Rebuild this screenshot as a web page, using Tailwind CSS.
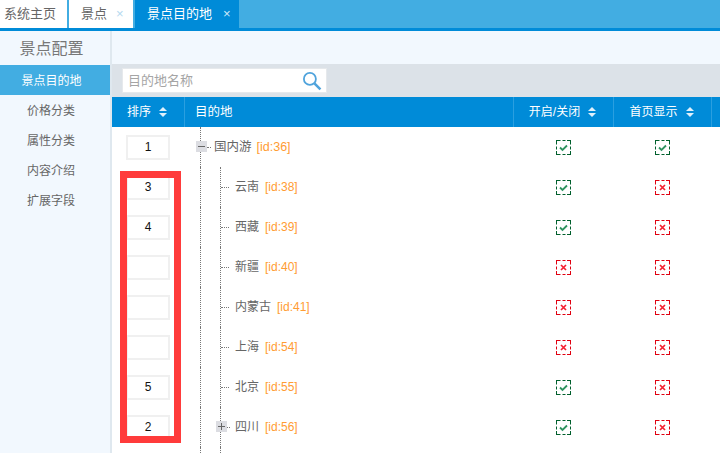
<!DOCTYPE html>
<html lang="zh">
<head>
<meta charset="utf-8">
<script src="https://cdn.jsdelivr.net/npm/@tailwindcss/browser@4"></script>
</head>
<body class="w-[720px] h-[453px] overflow-hidden bg-white font-['Liberation_Sans','Noto_Sans_CJK_SC',sans-serif] text-[12px] text-[#666]">
<svg class="hidden"><defs>
<symbol id="ok" viewBox="0 0 15 15"><path d="M0 .5h4.500m2 0h3m1.500 0h4M0 14.500h4.500m2 0h3m1.500 0h4M.5 0v4.500m0 2v3m0 1.500v4M14.500 0v4.500m0 2v3m0 1.500v4" fill="none" stroke="#005f2c"/><path d="M4 7.500 6.500 10 11 5.500" fill="none" stroke="#2f9460" stroke-width="1.800"/></symbol>
<symbol id="no" viewBox="0 0 15 15"><path d="M0 .5h4.500m2 0h3m1.500 0h4M0 14.500h4.500m2 0h3m1.500 0h4M.5 0v4.500m0 2v3m0 1.500v4M14.500 0v4.500m0 2v3m0 1.500v4" fill="none" stroke="#e00010"/><path d="M5 5l5 5M10 5l-5 5" fill="none" stroke="#f52030" stroke-width="1.700"/></symbol>
<symbol id="sort" viewBox="0 0 8 10"><path d="M4 0 8 4H0zM0 6h8L4 10z" fill="#dff0fb"/></symbol>
</defs></svg>

<div class="flex h-[31px] bg-[#42ade2] border-b-[3px] border-[#008bd8] text-[13px]">
  <div class="w-[69px] bg-white border-r-2 border-[#42ade2] pl-[4px] leading-[28px]">系统主页</div>
  <div class="w-[66px] bg-white border-r-2 border-[#42ade2] pl-[12px] flex items-center gap-[9px]"><span>景点</span><span class="text-[#b5d9ef]">×</span></div>
  <div class="w-[104px] bg-[#008bd8] text-white pl-[12px] flex items-center gap-[11px]"><span>景点目的地</span><span class="text-[#cfe9f8]">×</span></div>
</div>

<div class="flex h-[422px]">
  <aside class="w-[112px] shrink-0 bg-[#f2f8fe] border-r-2 border-[#dfe8ef]">
    <div class="h-[34px] pr-[7px] text-center text-[16px] leading-[36px] text-[#777]">景点配置</div>
    <ul class="text-center leading-[32px] text-[#666]">
      <li class="h-[30px] pr-[7px] bg-[#42ade2] text-white">景点目的地</li>
      <li class="h-[30px] pr-[8px]">价格分类</li>
      <li class="h-[30px] pr-[8px]">属性分类</li>
      <li class="h-[30px] pr-[8px]">内容介绍</li>
      <li class="h-[30px] pr-[8px]">扩展字段</li>
    </ul>
  </aside>

  <main class="relative flex-1 min-w-0">
    <div class="h-[33px] bg-[#f2f8fe]"></div>
    <div class="h-[33px] bg-[#dce2e8] pl-[10px] pt-[4px]">
      <div class="w-[205px] h-[25px] bg-white border border-[#e6e9ec] flex items-center justify-between pl-[5px] pr-[4px] text-[13px] text-[#a5a5a5]">
        <span>目的地名称</span>
        <svg class="w-[20px] h-[20px]" viewBox="0 0 19 19" fill="none" stroke="#4fa3dc"><circle cx="7.500" cy="7.500" r="5.700" stroke-width="1.700"/><path d="M11.800 11.800 17.500 17.500" stroke-width="2.400"/></svg>
      </div>
    </div>

    <div class="flex h-[30px] bg-[#008bd8] text-white items-center">
      <div class="w-[73px] h-full border-r border-[#2a9fe0] flex items-center justify-center gap-[8px] pr-[2px]"><span>排序</span><svg class="w-[8px] h-[10px]"><use href="#sort"/></svg></div>
      <div class="w-[329px] h-full border-r border-[#2a9fe0] flex items-center pl-[10px] text-[12.500px]">目的地</div>
      <div class="w-[100px] h-full border-r border-[#2a9fe0] flex items-center justify-center gap-[8px] pr-[2px]"><span>开启/关闭</span><svg class="w-[8px] h-[10px]"><use href="#sort"/></svg></div>
      <div class="w-[98px] h-full border-r border-[#2a9fe0] flex items-center justify-center gap-[8px] pr-[2px]"><span>首页显示</span><svg class="w-[8px] h-[10px]"><use href="#sort"/></svg></div>
    </div>

    <div class="h-[40px] flex items-stretch">
      <div class="w-[72px] flex items-center pl-[14px]"><div class="w-[44px] h-[25px] border-2 border-[#f0f0f0] text-center leading-[21px] text-[#111]">1</div></div>
      <div class="w-[329px] relative">
        <span class="absolute left-[16px] top-0 bottom-0 border-l border-dotted border-[#777]"></span>
        <span class="absolute left-[12px] top-[14px] w-[11px] h-[11px] bg-[#dcdde2] flex items-center justify-center"><span class="w-[7px] h-px bg-[#666]"></span></span>
        <span class="absolute left-[23px] top-[20px] w-[4px] border-t border-dotted border-[#777]"></span>
        <span class="absolute left-[30px] top-[11px] text-[12.500px] whitespace-nowrap">国内游<span class="ml-[5px] text-[#ff9c33]">[id:36]</span></span>
      </div>
      <div class="w-[100px] flex items-center justify-center"><svg class="w-[15px] h-[15px]"><use href="#ok"/></svg></div>
      <div class="w-[98px] flex items-center justify-center"><svg class="w-[15px] h-[15px]"><use href="#ok"/></svg></div>
    </div>

    <div class="h-[40px] flex items-stretch">
      <div class="w-[72px] flex items-center pl-[14px]"><div class="w-[44px] h-[25px] border-2 border-[#f0f0f0] text-center leading-[21px] text-[#111]">3</div></div>
      <div class="w-[329px] relative"><span class="absolute left-[16px] top-0 bottom-0 border-l border-dotted border-[#777]"></span><span class="absolute left-[36px] top-0 bottom-0 border-l border-dotted border-[#777]"></span><span class="absolute left-[37px] top-[20px] w-[8px] border-t border-dotted border-[#777]"></span><span class="absolute left-[51px] top-[11px] whitespace-nowrap">云南<span class="ml-[6px] text-[#ff9c33]">[id:38]</span></span></div>
      <div class="w-[100px] flex items-center justify-center"><svg class="w-[15px] h-[15px]"><use href="#ok"/></svg></div>
      <div class="w-[98px] flex items-center justify-center"><svg class="w-[15px] h-[15px]"><use href="#no"/></svg></div>
    </div>

    <div class="h-[40px] flex items-stretch">
      <div class="w-[72px] flex items-center pl-[14px]"><div class="w-[44px] h-[25px] border-2 border-[#f0f0f0] text-center leading-[21px] text-[#111]">4</div></div>
      <div class="w-[329px] relative"><span class="absolute left-[16px] top-0 bottom-0 border-l border-dotted border-[#777]"></span><span class="absolute left-[36px] top-0 bottom-0 border-l border-dotted border-[#777]"></span><span class="absolute left-[37px] top-[20px] w-[8px] border-t border-dotted border-[#777]"></span><span class="absolute left-[51px] top-[11px] whitespace-nowrap">西藏<span class="ml-[6px] text-[#ff9c33]">[id:39]</span></span></div>
      <div class="w-[100px] flex items-center justify-center"><svg class="w-[15px] h-[15px]"><use href="#ok"/></svg></div>
      <div class="w-[98px] flex items-center justify-center"><svg class="w-[15px] h-[15px]"><use href="#no"/></svg></div>
    </div>

    <div class="h-[40px] flex items-stretch">
      <div class="w-[72px] flex items-center pl-[14px]"><div class="w-[44px] h-[25px] border-2 border-[#f0f0f0]"></div></div>
      <div class="w-[329px] relative"><span class="absolute left-[16px] top-0 bottom-0 border-l border-dotted border-[#777]"></span><span class="absolute left-[36px] top-0 bottom-0 border-l border-dotted border-[#777]"></span><span class="absolute left-[37px] top-[20px] w-[8px] border-t border-dotted border-[#777]"></span><span class="absolute left-[51px] top-[11px] whitespace-nowrap">新疆<span class="ml-[6px] text-[#ff9c33]">[id:40]</span></span></div>
      <div class="w-[100px] flex items-center justify-center"><svg class="w-[15px] h-[15px]"><use href="#no"/></svg></div>
      <div class="w-[98px] flex items-center justify-center"><svg class="w-[15px] h-[15px]"><use href="#no"/></svg></div>
    </div>

    <div class="h-[40px] flex items-stretch">
      <div class="w-[72px] flex items-center pl-[14px]"><div class="w-[44px] h-[25px] border-2 border-[#f0f0f0]"></div></div>
      <div class="w-[329px] relative"><span class="absolute left-[16px] top-0 bottom-0 border-l border-dotted border-[#777]"></span><span class="absolute left-[36px] top-0 bottom-0 border-l border-dotted border-[#777]"></span><span class="absolute left-[37px] top-[20px] w-[8px] border-t border-dotted border-[#777]"></span><span class="absolute left-[51px] top-[11px] whitespace-nowrap">内蒙古<span class="ml-[6px] text-[#ff9c33]">[id:41]</span></span></div>
      <div class="w-[100px] flex items-center justify-center"><svg class="w-[15px] h-[15px]"><use href="#no"/></svg></div>
      <div class="w-[98px] flex items-center justify-center"><svg class="w-[15px] h-[15px]"><use href="#no"/></svg></div>
    </div>

    <div class="h-[40px] flex items-stretch">
      <div class="w-[72px] flex items-center pl-[14px]"><div class="w-[44px] h-[25px] border-2 border-[#f0f0f0]"></div></div>
      <div class="w-[329px] relative"><span class="absolute left-[16px] top-0 bottom-0 border-l border-dotted border-[#777]"></span><span class="absolute left-[36px] top-0 bottom-0 border-l border-dotted border-[#777]"></span><span class="absolute left-[37px] top-[20px] w-[8px] border-t border-dotted border-[#777]"></span><span class="absolute left-[51px] top-[11px] whitespace-nowrap">上海<span class="ml-[6px] text-[#ff9c33]">[id:54]</span></span></div>
      <div class="w-[100px] flex items-center justify-center"><svg class="w-[15px] h-[15px]"><use href="#no"/></svg></div>
      <div class="w-[98px] flex items-center justify-center"><svg class="w-[15px] h-[15px]"><use href="#no"/></svg></div>
    </div>

    <div class="h-[40px] flex items-stretch">
      <div class="w-[72px] flex items-center pl-[14px]"><div class="w-[44px] h-[25px] border-2 border-[#f0f0f0] text-center leading-[21px] text-[#111]">5</div></div>
      <div class="w-[329px] relative"><span class="absolute left-[16px] top-0 bottom-0 border-l border-dotted border-[#777]"></span><span class="absolute left-[36px] top-0 bottom-0 border-l border-dotted border-[#777]"></span><span class="absolute left-[37px] top-[20px] w-[8px] border-t border-dotted border-[#777]"></span><span class="absolute left-[51px] top-[11px] whitespace-nowrap">北京<span class="ml-[6px] text-[#ff9c33]">[id:55]</span></span></div>
      <div class="w-[100px] flex items-center justify-center"><svg class="w-[15px] h-[15px]"><use href="#ok"/></svg></div>
      <div class="w-[98px] flex items-center justify-center"><svg class="w-[15px] h-[15px]"><use href="#no"/></svg></div>
    </div>

    <div class="h-[40px] flex items-stretch">
      <div class="w-[72px] flex items-center pl-[14px]"><div class="w-[44px] h-[25px] border-2 border-[#f0f0f0] text-center leading-[21px] text-[#111]">2</div></div>
      <div class="w-[329px] relative"><span class="absolute left-[16px] top-0 bottom-0 border-l border-dotted border-[#777]"></span><span class="absolute left-[36px] top-0 bottom-0 border-l border-dotted border-[#777]"></span>
        <span class="absolute left-[32px] top-[14px] w-[11px] h-[11px] bg-[#dcdde2] flex items-center justify-center"><svg class="w-[7px] h-[7px]" viewBox="0 0 7 7"><path d="M0 3.500h7M3.500 0v7" stroke="#666"/></svg></span>
        <span class="absolute left-[43px] top-[20px] w-[3px] border-t border-dotted border-[#777]"></span>
        <span class="absolute left-[51px] top-[11px] whitespace-nowrap">四川<span class="ml-[6px] text-[#ff9c33]">[id:56]</span></span></div>
      <div class="w-[100px] flex items-center justify-center"><svg class="w-[15px] h-[15px]"><use href="#ok"/></svg></div>
      <div class="w-[98px] flex items-center justify-center"><svg class="w-[15px] h-[15px]"><use href="#no"/></svg></div>
    </div>

    <div class="h-[6px] relative"><span class="absolute left-[88px] top-0 bottom-0 border-l border-dotted border-[#777]"></span><span class="absolute left-[108px] top-0 bottom-0 border-l border-dotted border-[#777]"></span></div>

    <div class="absolute left-[8px] top-[140px] w-[61px] h-[272px] border-[7px] border-[#ff3b3b]"></div>
  </main>
</div>
</body>
</html>
